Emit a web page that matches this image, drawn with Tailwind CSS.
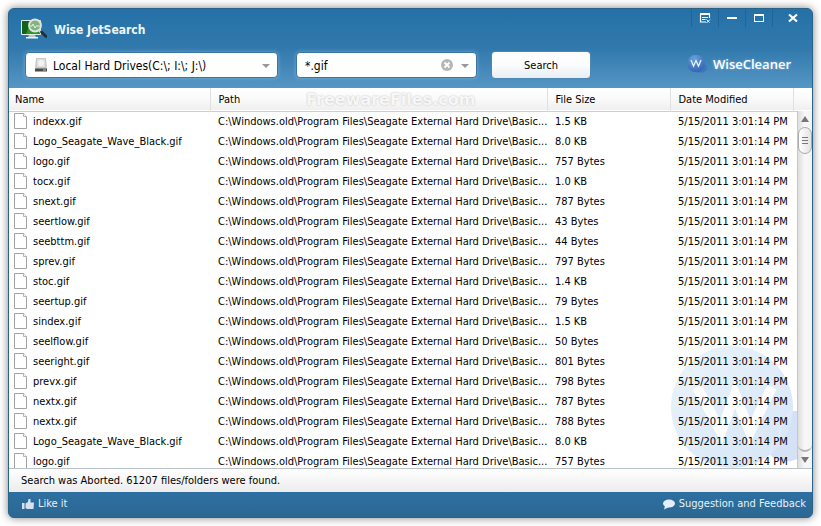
<!DOCTYPE html>
<html lang="en">
<head>
<meta charset="utf-8">
<title>Wise JetSearch</title>
<script src="https://cdn.jsdelivr.net/npm/@tailwindcss/browser@4"></script>
</head>
<body class="bg-white font-['DejaVu_Sans_Condensed','DejaVu_Sans',sans-serif] text-[11px] text-black">
<svg class="hidden">
  <defs>
    <linearGradient id="paper" x1="0" y1="0" x2="1" y2="1"><stop offset="0" stop-color="#fff"/><stop offset="1" stop-color="#ededed"/></linearGradient>
  </defs>
  <symbol id="file" viewBox="0 0 14 17">
    <path d="M.5.5H9.500L12.500 3.500V15.500H.5Z" fill="url(#paper)" stroke="#a3a3a3"/>
    <path d="M9.500.5V3.500H12.500" fill="#fff" stroke="#b3b3b3"/>
  </symbol>
</svg>
<div class="h-screen p-2">
<div class="flex h-full flex-col overflow-hidden rounded-md border border-[#2b6288] bg-[#2d6b9a] shadow-[0_0_8px_rgba(0,0,0,0.5)]">

  <header class="flex h-[79px] shrink-0 flex-col bg-linear-to-b from-[#2471a7] via-[#3179ad] to-[#5596c5]">
    <div class="flex h-9 items-start justify-between">
      <div class="flex items-center gap-[7px] pl-3 pt-[9px]">
        <svg class="h-6 w-6.5" viewBox="0 0 26 24">
          <rect x="0" y="2" width="20" height="15" rx="1" fill="#e3ebe4"/>
          <rect x="1" y="3" width="18" height="13" fill="#2f9428"/>
          <path d="M1 3h9L5 16H1Z" fill="#14611a"/>
          <path d="M8 17h6l1 2H7Z" fill="#b9c7cf"/><path d="M5 19h12v1.500H5Z" fill="#eef4f8"/>
          <circle cx="14" cy="7.500" r="6" fill="#8fb58a" fill-opacity=".9" stroke="#dde6e4" stroke-width="1.800"/>
          <path d="M9 8h2l1-2 2 4 1-2h4" stroke="#dff5dc" stroke-width="1" fill="none"/>
          <path d="M18 12L20 14" stroke="#d5dcda" stroke-width="2.500"/>
          <path d="M20.500 14L25 18.500" stroke="#222c33" stroke-width="2.600" stroke-linecap="round"/>
        </svg>
        <h1 class="text-xs font-bold text-[#eef5fa]">Wise JetSearch</h1>
      </div>
      <div class="flex h-[18px] text-white">
        <button aria-label="Menu" class="flex w-[27px] items-center justify-center border-l border-[#1d5c8c]/60">
          <svg class="h-3 w-3" viewBox="0 0 12 12" fill="none" stroke="#fff"><path d="M10.500 6V2.500H1.500V10H7" stroke-width="1.200"/><path d="M1 2H11" stroke-width="1.800"/><path d="M3 5.500H9M3 7.500H6.500" /><path d="M7.500 7.500L10.500 10.500M11 7.500L7.500 11"/></svg>
        </button>
        <button aria-label="Minimize" class="flex w-[27px] items-center justify-center border-l border-[#1d5c8c]/60">
          <svg class="h-3 w-3" viewBox="0 0 12 12"><path d="M1 5h10v2H1Z" fill="#fff"/></svg>
        </button>
        <button aria-label="Maximize" class="flex w-[27px] items-center justify-center border-l border-[#1d5c8c]/60">
          <svg class="h-3 w-3" viewBox="0 0 12 12"><path d="M1 2h10v8H1ZM2 4v5h8V4Z" fill="#fff" fill-rule="evenodd"/></svg>
        </button>
        <button aria-label="Close" class="flex w-10 items-center justify-center border-l border-[#1d5c8c]/60">
          <svg class="h-3 w-3" viewBox="0 0 12 12"><path d="M2 2.500L10 9.500M10 2.500L2 9.500" stroke="#fff" stroke-width="2.200"/></svg>
        </button>
      </div>
    </div>
    <div class="flex h-10 items-center pl-4">
      <div class="relative w-[253px] rounded-sm shadow-[0_0_4px_rgba(190,225,250,0.4)]">
        <svg class="pointer-events-none absolute left-2.5 top-1.5 h-3.5 w-3" viewBox="0 0 12 14"><path d="M1 0h10l1 11H0Z" fill="#c9c9c9"/><path d="M2 1h8v8H2Z" fill="#e0e0e0"/><ellipse cx="6" cy="5" rx="3" ry="3" fill="#f3f3f3"/><path d="M0 10.500h12v3H0Z" fill="#4a4a4a"/><path d="M8 11.500h3v1H8Z" fill="#9c9"/></svg>
        <select aria-label="Search location" class="block h-[26px] w-full appearance-none rounded-sm border border-[#3a76a2] bg-white pl-[27px] pr-6 pt-0.5 text-xs">
          <option>Local Hard Drives(C:\; I:\; J:\)</option>
        </select>
        <svg class="pointer-events-none absolute right-2 top-3 h-1 w-2" viewBox="0 0 8 4"><path d="M0 0h8L4 4Z" fill="#97979c"/></svg>
      </div>
      <div class="relative ml-[18px] w-[181px] rounded-sm shadow-[0_0_4px_rgba(190,225,250,0.4)]">
        <input aria-label="File name pattern" value="*.gif" class="block h-[26px] w-full rounded-sm border border-[#3a76a2] bg-white pl-2 pr-12 pt-0.5 text-xs">
        <button aria-label="Clear" class="absolute right-6 top-[7px] h-3 w-3"><svg class="h-3 w-3" viewBox="0 0 12 12"><circle cx="6" cy="6" r="6" fill="#b6b6b6"/><path d="M3.500 3.500L8.500 8.500M8.500 3.500L3.500 8.500" stroke="#fff" stroke-width="1.800"/></svg></button>
        <button aria-label="Show recent patterns" class="absolute right-2 top-3 h-1 w-2"><svg class="h-1 w-2" viewBox="0 0 8 4"><path d="M0 0h8L4 4Z" fill="#97979c"/></svg></button>
      </div>
      <button class="ml-3.5 h-7 w-[100px] rounded-sm border border-[#4c88b3] bg-linear-to-b from-white via-[#fbfcfd] to-[#e6eef4] pt-0.5">Search</button>
      <a href="#" class="ml-auto mr-[21px] flex h-5 items-center gap-1.5 font-['Open_Sans',sans-serif] text-[13px] font-semibold text-white [text-shadow:0_0_3px_rgba(180,220,255,0.6)]">
        <svg class="h-5 w-5" viewBox="0 0 20 20"><defs><radialGradient id="orb" cx=".4" cy=".2" r=".9"><stop offset="0" stop-color="#6a9fda"/><stop offset="1" stop-color="#2b5fb2"/></radialGradient></defs><circle cx="16.500" cy="13" r="3.500" fill="#3d74c2"/><path d="M9 17.500h8v-3H9Z" fill="#3d74c2"/><circle cx="9" cy="8.500" r="8.800" fill="url(#orb)"/><path d="M4 5L6.500 11L9 5.500L11.500 11L14 5" stroke="#e6effa" stroke-width="1.300" fill="none"/></svg>
        WiseCleaner
      </a>
    </div>
  </header>

  <main class="relative min-h-0 flex-1 overflow-hidden bg-white">
    <svg class="absolute bottom-0 right-[15px] h-[122px] w-32" viewBox="0 0 128 122">
      <defs><linearGradient id="wm" x1="0" y1="0" x2="1" y2="1"><stop offset="0" stop-color="#eaf4fc"/><stop offset="1" stop-color="#d5e4f6"/></linearGradient></defs>
      <path d="M128 65H120L100 108Q112 120 128 113Z" fill="#d5e2f5"/>
      <circle cx="63" cy="61" r="61" fill="url(#wm)"/>
      <path d="M123 65Q110 76 111 90Q101 96 102 108" fill="none" stroke="#e4edf9" stroke-width="1.500"/>
      <path d="M28 41L52 86L66 48L81 86L103 41" fill="none" stroke="#fff" stroke-width="10"/>
    </svg>
    <table class="relative w-full table-fixed border-collapse text-left">
      <colgroup><col class="w-[201px]"><col><col class="w-[123px]"><col class="w-[123px]"><col class="w-[19px]"></colgroup>
      <thead>
        <tr class="h-[23px] border-b border-[#cdcdcd] bg-linear-to-b from-white via-[#fafafa] to-[#efefef]">
          <th class="border-r border-[#e0e0e0] pb-0 pl-1.5 pt-0.5 font-normal">Name</th>
          <th class="border-r border-[#e0e0e0] pb-0 pl-2 pt-0.5 font-normal">Path</th>
          <th class="border-r border-[#e0e0e0] pb-0 pl-2 pt-0.5 font-normal">File Size</th>
          <th class="border-r border-[#e0e0e0] pb-0 pl-2 pt-0.5 font-normal">Date Modified</th>
          <td></td>
        </tr>
      </thead>
      <tbody id="rows"></tbody>
    </table>
    <div aria-hidden="true" class="absolute left-[37%] top-0 font-['DejaVu_Sans',sans-serif] text-base leading-6 font-bold text-[#f7f7f7] [text-shadow:0_0_2px_#bbb]">FreewareFiles.com</div>
    <div class="absolute bottom-0 right-0 top-[23px] flex w-[15px] flex-col items-center border-l border-[#c8c8c8] bg-linear-to-r from-[#dedede] via-[#f8f8f8] to-[#f3f3f3]">
      <button aria-label="Scroll up" class="flex h-4 w-full items-center justify-center"><svg class="h-1.5 w-2" viewBox="0 0 8 6"><path d="M4 0L8 6H0Z" fill="#777"/></svg></button>
      <div class="flex h-[27px] w-full flex-col items-center justify-center gap-0.5 rounded-full border border-[#a8a8a8] bg-linear-to-r from-white to-[#e3e3e3]">
        <span class="h-px w-1.5 bg-[#777]"></span><span class="h-px w-1.5 bg-[#777]"></span><span class="h-px w-1.5 bg-[#777]"></span>
      </div>
      <div class="w-full flex-1 rounded-b-full border-b-2 border-[#b5b5b5]"></div>
      <button aria-label="Scroll down" class="flex h-4 w-full items-center justify-center"><svg class="h-1.5 w-2" viewBox="0 0 8 6"><path d="M0 0h8L4 6Z" fill="#777"/></svg></button>
    </div>
  </main>

  <div class="flex h-6 shrink-0 items-center border-t border-[#b9c4ca] bg-linear-to-b from-white to-[#ececec] pl-3 pt-0.5">Search was Aborted. 61207 files/folders were found.</div>

  <footer class="flex h-[25px] shrink-0 items-center justify-between bg-linear-to-b from-[#2d70a2] to-[#2c6793] pl-[13px] pr-1.5 text-[#e8f1f8]">
    <a href="#" class="flex items-center gap-1"><svg class="h-3 w-3" viewBox="0 0 12 12"><path d="M0 4h2.500v6H0ZM3.500 4.500L6 3L6.500 0H8.500V3.500H12L11.500 10H5L3.500 9Z" fill="#d5e2ee"/></svg>Like it</a>
    <a href="#" class="flex items-center gap-1"><svg class="h-3 w-3" viewBox="0 0 12 12"><ellipse cx="6" cy="4.500" rx="6" ry="4" fill="#e6eff7"/><path d="M2 7L1 10.500L6 8Z" fill="#e6eff7"/></svg>Suggestion and Feedback</a>
  </footer>
</div>
</div>

<script>
const files = [
  ["indexx.gif", "1.5 KB"], ["Logo_Seagate_Wave_Black.gif", "8.0 KB"], ["logo.gif", "757 Bytes"],
  ["tocx.gif", "1.0 KB"], ["snext.gif", "787 Bytes"], ["seertlow.gif", "43 Bytes"],
  ["seebttm.gif", "44 Bytes"], ["sprev.gif", "797 Bytes"], ["stoc.gif", "1.4 KB"],
  ["seertup.gif", "79 Bytes"], ["sindex.gif", "1.5 KB"], ["seelflow.gif", "50 Bytes"],
  ["seeright.gif", "801 Bytes"], ["prevx.gif", "798 Bytes"], ["nextx.gif", "787 Bytes"],
  ["nextx.gif", "788 Bytes"], ["Logo_Seagate_Wave_Black.gif", "8.0 KB"], ["logo.gif", "757 Bytes"]
];
document.getElementById("rows").innerHTML = files.map(([name, size]) => `
  <tr class="h-5 whitespace-nowrap">
    <td class="p-0"><div class="flex h-5 items-center gap-[5px] pl-[5px]"><svg class="h-[17px] w-3.5 shrink-0"><use href="#file"/></svg><span class="pt-0.5">${name}</span></div></td>
    <td class="pb-0 pl-2 pr-0 pt-0.5">C:\\Windows.old\\Program Files\\Seagate External Hard Drive\\Basic...</td>
    <td class="pb-0 pl-2 pr-0 pt-0.5">${size}</td>
    <td class="pb-0 pl-2 pr-0 pt-0.5">5/15/2011 3:01:14 PM</td>
    <td></td>
  </tr>`).join("");
</script>
</body>
</html>
